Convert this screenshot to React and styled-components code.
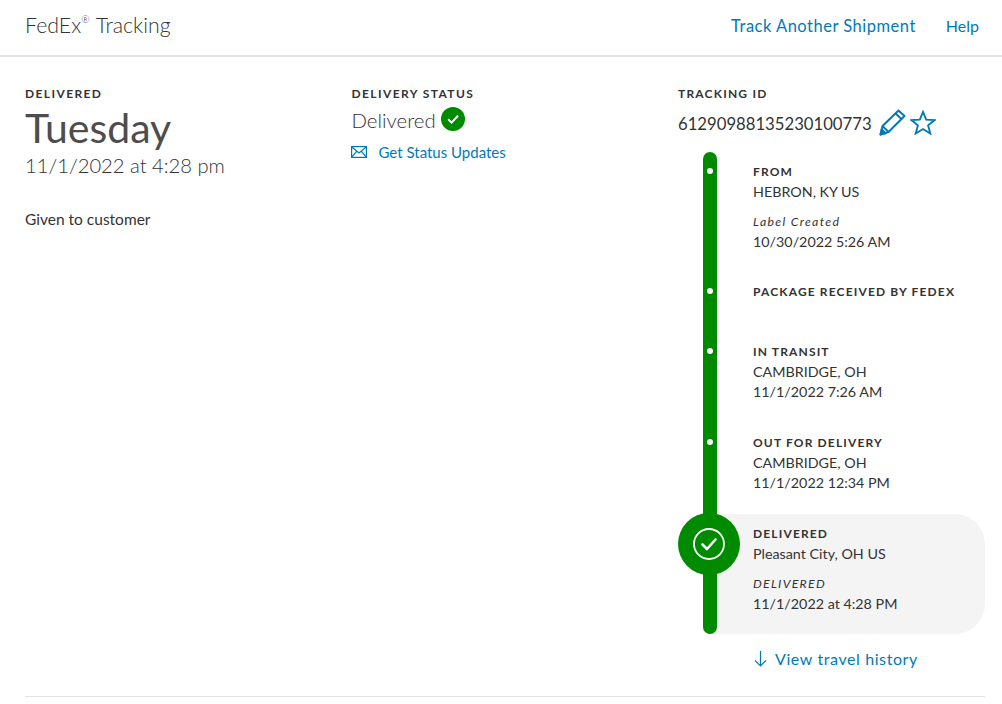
import React from "react";
import styled, { createGlobalStyle } from "styled-components";

const Global = createGlobalStyle`
  html, body { margin: 0; padding: 0; background: #fff; }
  body { font-family: "Lato", "Open Sans", sans-serif; color: #333; }
  * { box-sizing: border-box; }
`;

const BLUE = "#007ab7";

const Header = styled.header`
  height: 57px;
  border-bottom: 2px solid #e3e3e3;
  display: flex;
  align-items: center;
  justify-content: space-between;
  padding: 0 23px 4px 25px;
`;
const Brand = styled.div`
  font-size: 21.3px;
  font-weight: 300;
  color: #333;
  margin-bottom: 2px;
  sup { font-size: 10px; line-height: 0; position: relative; top: -1px; vertical-align: super; margin-right: 1px; }
`;
const Nav = styled.nav`
  display: flex;
  align-items: baseline;
  gap: 30px;
`;
const Link = styled.a`
  color: ${BLUE};
  font-size: ${(p) => p.$size || 16}px;
  letter-spacing: ${(p) => p.$spacing || 0}px;
  text-decoration: none;
`;
const Main = styled.main`
  display: grid;
  grid-template-columns: 326.5px 326.5px 1fr;
  padding: 27px 17px 0 25px;
`;
const Column = styled.section`
  display: flex;
  flex-direction: column;
  align-items: flex-start;
`;
const Label = styled.div`
  font-size: 12px;
  line-height: 20px;
  font-weight: 700;
  letter-spacing: ${(p) => p.$spacing || 1.4}px;
  color: #333;
  text-transform: uppercase;
`;
const Day = styled.div`
  font-size: 41px;
  line-height: 48px;
  font-weight: 400;
  color: #4d4d4d;
`;
const DateLine = styled.div`
  font-size: 20.2px;
  line-height: 26px;
  font-weight: 300;
`;
const Note = styled.div`
  font-size: 15.5px;
  line-height: 20px;
  margin-top: 31px;
`;
const StatusLine = styled.div`
  display: flex;
  align-items: center;
  gap: 5px;
  font-size: 20.4px;
  font-weight: 300;
  line-height: 26px;
  margin-top: 3px;
  svg { margin-top: -3px; }
`;
const Updates = styled.div`
  display: flex;
  align-items: center;
  gap: 12px;
  margin-top: 9px;
  margin-left: -1px;
  line-height: 20px;
`;
const IdLine = styled.div`
  display: flex;
  align-items: center;
  font-size: 16.7px;
  line-height: 26px;
  margin-top: 7px;
  gap: 7px;
`;
const Icons = styled.div`
  display: flex;
  align-items: center;
  gap: 4px;
  margin-top: -4px;
`;
const Timeline = styled.div`
  position: relative;
  width: 307px;
  margin-top: 15px;
`;
const Rail = styled.div`
  position: absolute;
  left: 25px;
  top: 0;
  bottom: 0;
  width: 14px;
  border-radius: 7px;
  background: #008a00;
  z-index: 1;
`;
const Row = styled.div`
  position: relative;
  height: ${(p) => p.$h}px;
  padding: 10px 0 0 75px;
`;
const Panel = styled(Row)`
  padding-left: 43px;
  margin-left: 32px;
  background: #f4f4f4;
  border-radius: 0 30px 30px 0;
`;
const Dot = styled.span`
  position: absolute;
  left: 29px;
  top: 16px;
  width: 6px;
  height: 6px;
  border-radius: 50%;
  background: #fff;
  z-index: 2;
`;
const Marker = styled.div`
  position: absolute;
  left: -32px;
  top: -1px;
  width: 62px;
  height: 62px;
  border-radius: 50%;
  background: #008a00;
  display: flex;
  align-items: center;
  justify-content: center;
  z-index: 2;
`;
const StepTitle = styled.div`
  font-size: 12px;
  line-height: 20px;
  font-weight: 700;
  letter-spacing: 1.15px;
  text-transform: uppercase;
`;
const StepText = styled.div`
  font-size: 14.3px;
  line-height: 20px;
`;
const StepNote = styled.div`
  font-size: 12.3px;
  line-height: 20px;
  font-style: italic;
  letter-spacing: 1.3px;
  margin-top: 10px;
`;
const More = styled.div`
  display: flex;
  align-items: center;
  gap: 8px;
  padding-left: 76px;
  margin-top: 13px;
  line-height: 24px;
`;
const Rule = styled.hr`
  margin: 25px 17px 0 25px;
  border: 0;
  border-top: 1px solid #e3e3e3;
`;

const Pencil = () => (
  <svg width="27" height="27" viewBox="0 0 27 27" fill="none" stroke={BLUE} strokeWidth="2" strokeLinejoin="round">
    <path d="M1.5 25.5 L3.5 17 L19.5 1.5 L25.5 7 L9.5 23 Z" />
    <path d="M16.5 4.5 L22.5 10" />
    <path d="M3.5 17 L9.5 23" />
    <path d="M1.5 25.5 L2.7 20.5 L6.5 24.2 Z" fill={BLUE} />
  </svg>
);
const Star = () => (
  <svg width="26" height="25" viewBox="0 0 28 27" fill="none" stroke={BLUE} strokeWidth="2" strokeLinejoin="miter">
    <path d="M14 2 L17.4 10.4 L26.6 10.9 L19.5 16.6 L21.9 25.4 L14 20.5 L6.1 25.4 L8.5 16.6 L1.4 10.9 L10.6 10.4 Z" />
  </svg>
);
const Envelope = () => (
  <svg width="16" height="12" viewBox="0 0 16 12" fill="none" stroke={BLUE} strokeWidth="1.2">
    <rect x="0.6" y="0.6" width="14.8" height="10.8" />
    <path d="M0.6 0.8 L8 7 L15.4 0.8 M0.8 11.2 L5.8 5.2 M15.2 11.2 L10.2 5.2" />
  </svg>
);
const StatusCheck = () => (
  <svg width="24" height="24" viewBox="0 0 24 24">
    <circle cx="12" cy="12" r="12" fill="#008a00" />
    <path d="M7.2 12.2 L10.6 15.6 L17 8.8" fill="none" stroke="#fff" strokeWidth="2" />
  </svg>
);
const RingCheck = () => (
  <svg width="32" height="32" viewBox="0 0 32 32" fill="none" stroke="#fff">
    <circle cx="16" cy="16" r="15" strokeWidth="1.8" />
    <path d="M9.5 16.5 L14 21 L22.5 11.5" strokeWidth="2.6" strokeLinecap="round" strokeLinejoin="round" />
  </svg>
);
const ArrowDown = () => (
  <svg width="13" height="18" viewBox="0 0 14 18" fill="none" stroke={BLUE} strokeWidth="1.3">
    <path d="M7 0.5 V16.5 M1 10.5 L7 16.5 L13 10.5" />
  </svg>
);

const steps = [
  { h: 120, title: "From", lines: ["HEBRON, KY US"], note: "Label Created", time: "10/30/2022 5:26 AM" },
  { h: 60, title: "Package received by FedEx", lines: [] },
  { h: 91, title: "In transit", lines: ["CAMBRIDGE, OH", "11/1/2022 7:26 AM"] },
  { h: 91, title: "Out for delivery", lines: ["CAMBRIDGE, OH", "11/1/2022 12:34 PM"] },
];

export default function App() {
  return (
    <>
      <Global />
      <Header>
        <Brand>FedEx<sup>®</sup> Tracking</Brand>
        <Nav>
          <Link href="#" $size={16.5} $spacing={0.5}>Track Another Shipment</Link>
          <Link href="#">Help</Link>
        </Nav>
      </Header>
      <Main>
        <Column>
          <Label>Delivered</Label>
          <Day>Tuesday</Day>
          <DateLine>11/1/2022 at 4:28 pm</DateLine>
          <Note>Given to customer</Note>
        </Column>
        <Column>
          <Label>Delivery status</Label>
          <StatusLine>Delivered <StatusCheck /></StatusLine>
          <Updates>
            <Envelope />
            <Link href="#" $size={15}>Get Status Updates</Link>
          </Updates>
        </Column>
        <Column>
          <Label $spacing={1.2}>Tracking ID</Label>
          <IdLine>
            61290988135230100773
            <Icons><Pencil /><Star /></Icons>
          </IdLine>
          <Timeline>
            <Rail />
            {steps.map((s) => (
              <Row key={s.title} $h={s.h}>
                <Dot />
                <StepTitle>{s.title}</StepTitle>
                {s.lines.map((l) => <StepText key={l}>{l}</StepText>)}
                {s.note && <StepNote>{s.note}</StepNote>}
                {s.time && <StepText>{s.time}</StepText>}
              </Row>
            ))}
            <Panel $h={120}>
              <Marker><RingCheck /></Marker>
              <StepTitle>Delivered</StepTitle>
              <StepText>Pleasant City, OH US</StepText>
              <StepNote>DELIVERED</StepNote>
              <StepText>11/1/2022 at 4:28 PM</StepText>
            </Panel>
          </Timeline>
          <More>
            <ArrowDown />
            <Link href="#" $spacing={0.6}>View travel history</Link>
          </More>
        </Column>
      </Main>
      <Rule />
    </>
  );
}
